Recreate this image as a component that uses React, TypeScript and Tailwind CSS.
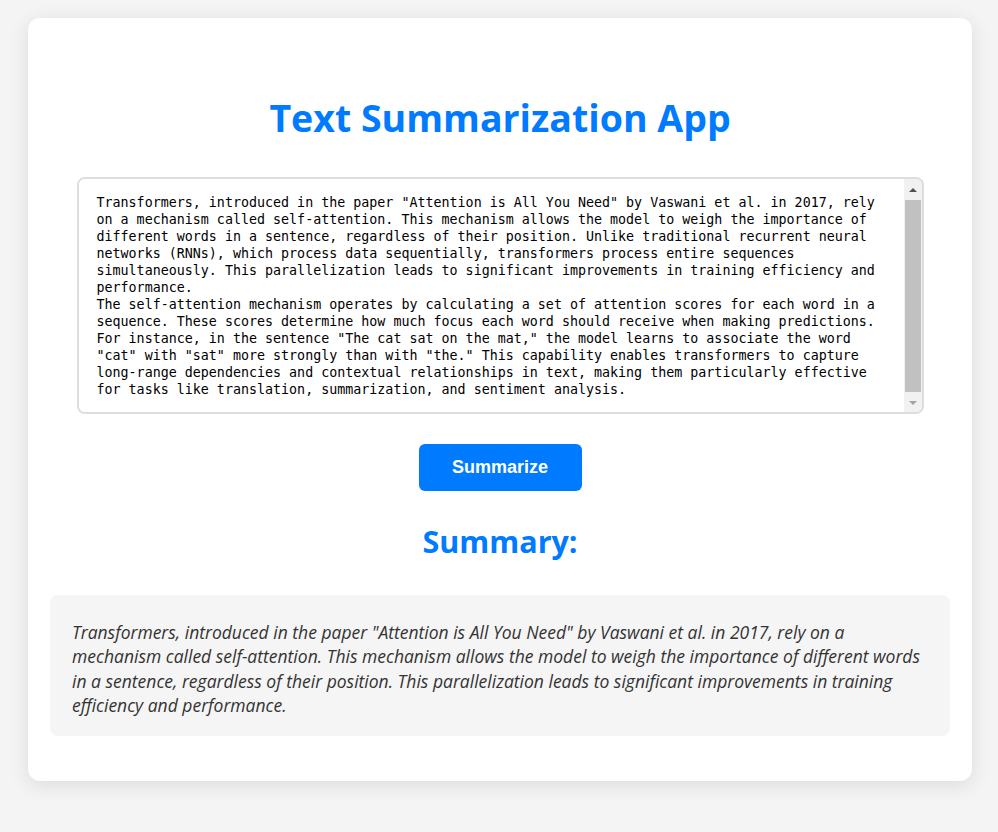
import { useState } from 'react';

const SOURCE_TEXT =
  'Transformers, introduced in the paper "Attention is All You Need" by Vaswani et al. in 2017, rely on a mechanism called self-attention. This mechanism allows the model to weigh the importance of different words in a sentence, regardless of their position. Unlike traditional recurrent neural networks (RNNs), which process data sequentially, transformers process entire sequences simultaneously. This parallelization leads to significant improvements in training efficiency and performance.\nThe self-attention mechanism operates by calculating a set of attention scores for each word in a sequence. These scores determine how much focus each word should receive when making predictions. For instance, in the sentence "The cat sat on the mat," the model learns to associate the word "cat" with "sat" more strongly than with "the." This capability enables transformers to capture long-range dependencies and contextual relationships in text, making them particularly effective for tasks like translation, summarization, and sentiment analysis.';

const SUMMARY_TEXT =
  'Transformers, introduced in the paper "Attention is All You Need" by Vaswani et al. in 2017, rely on a mechanism called self-attention. This mechanism allows the model to weigh the importance of different words in a sentence, regardless of their position. This parallelization leads to significant improvements in training efficiency and performance.';

// Classic scrollbar drawn next to the textarea (headless hides native ones)
function ScrollbarColumn() {
  return (
    <div className="flex w-[18px] shrink-0 flex-col bg-[#f1f1f1]">
      <div className="flex h-[21px] items-center justify-center">
        <div className="h-0 w-0 border-x-[4px] border-b-[4px] border-x-transparent border-b-[#505050]" />
      </div>
      <div className="mx-[1px] h-[192px] bg-[#c1c1c1]" />
      <div className="flex-1" />
      <div className="flex h-[18px] items-center justify-center">
        <div className="h-0 w-0 border-x-[4px] border-t-[4px] border-x-transparent border-t-[#a3a3a3]" />
      </div>
    </div>
  );
}

export default function App() {
  const [text, setText] = useState(SOURCE_TEXT);
  const [summary] = useState(SUMMARY_TEXT);

  return (
    <div className="min-h-screen bg-[#f4f4f4] pt-[18px] pb-[52px] font-['Open_Sans',sans-serif]">
      <div className="ml-[28px] w-[944px] rounded-[12px] bg-white px-[22px] pt-[76px] pb-[45px] shadow-[0_4px_20px_rgba(0,0,0,0.1)]">
        {/* Title */}
        <h1 className="text-center text-[37.5px] leading-[48px] font-bold text-[#007bff]">
          Text Summarization App
        </h1>

        {/* Input */}
        <div className="mt-[35px] flex justify-center">
          <div className="flex h-[237px] w-[847px] overflow-hidden rounded-[8px] border-2 border-[#ddd] bg-white">
            <textarea
              value={text}
              onChange={(e) => setText(e.target.value)}
              className="h-full min-w-0 flex-1 resize-none overflow-y-auto bg-white pt-[15px] pr-[17px] pb-[14px] pl-[18px] font-['DejaVu_Sans_Mono',monospace] text-[13.33px] leading-[17px] text-black outline-none [scrollbar-width:none]"
            />
            <ScrollbarColumn />
          </div>
        </div>

        {/* Action */}
        <div className="mt-[30px] flex justify-center">
          <button className="h-[47px] w-[163px] rounded-[6px] bg-[#007bff] font-['Liberation_Sans',Arial,sans-serif] text-[18px] font-bold text-white hover:bg-[#0069d9]">
            Summarize
          </button>
        </div>

        {/* Result */}
        <h2 className="mt-[30px] text-center text-[30.5px] leading-[40px] font-bold text-[#007bff]">Summary:</h2>

        <div className="mt-[34px] rounded-[8px] bg-[#f5f5f5] px-[22px] pt-[25px] pb-[18px]">
          <p className="text-[17.5px] leading-[24.4px] text-[#333] italic">{summary}</p>
        </div>
      </div>
    </div>
  );
}
